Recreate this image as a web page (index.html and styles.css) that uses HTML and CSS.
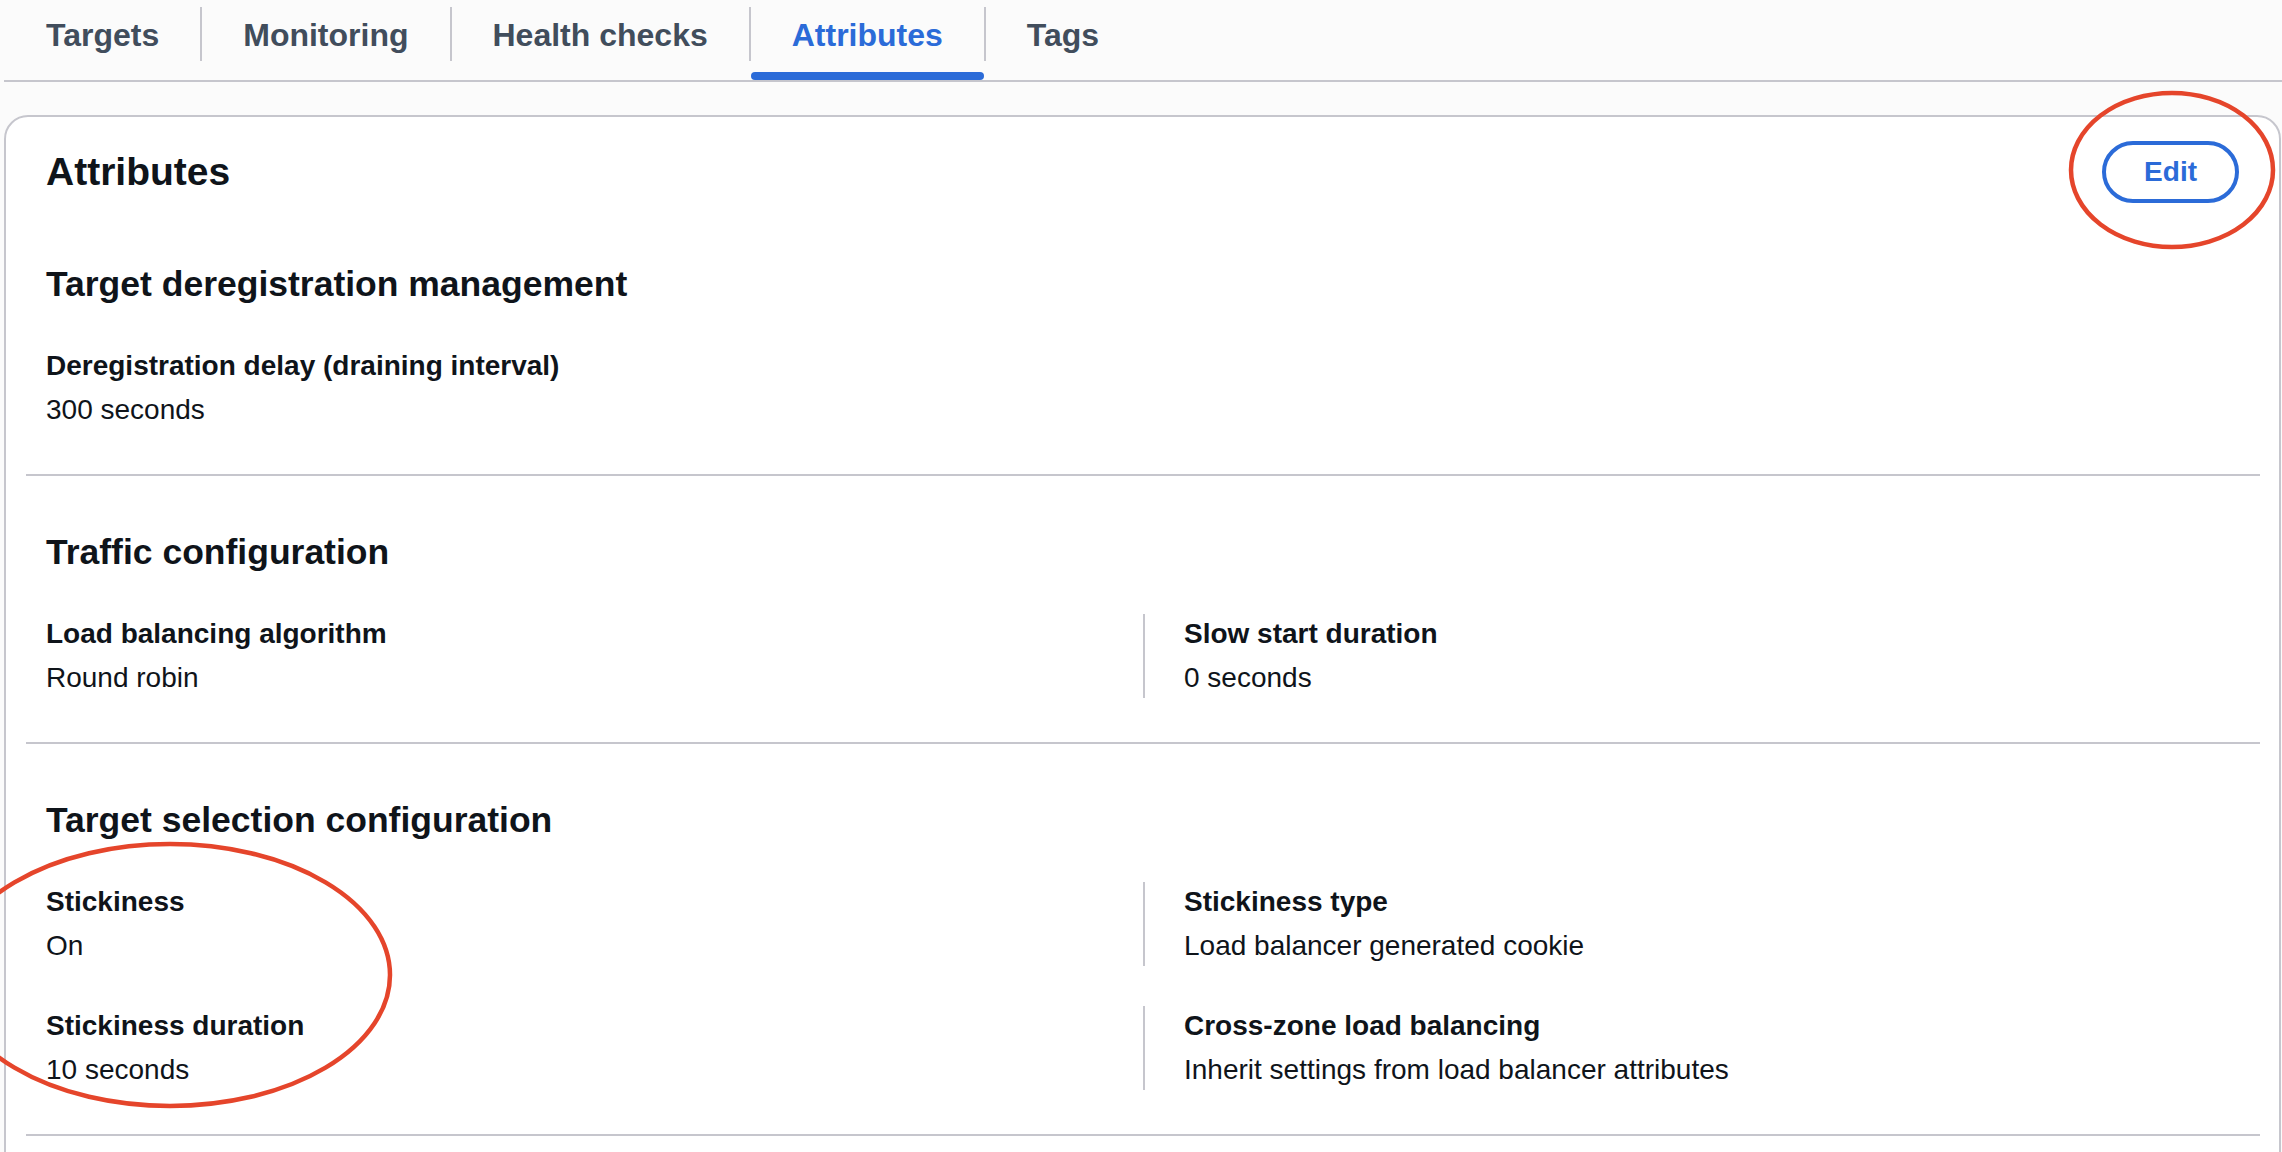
FILE: index.html
```html
<!DOCTYPE html>
<html lang="en">
<head>
<meta charset="utf-8">
<title>Target group attributes</title>
<link rel="stylesheet" href="styles.css">
</head>
<body>
<div class="page">
  <nav class="tabs">
    <div class="tab"><span class="tab-label">Targets</span><span class="tab-indicator"></span></div>
    <span class="tab-sep"></span>
    <div class="tab"><span class="tab-label">Monitoring</span><span class="tab-indicator"></span></div>
    <span class="tab-sep"></span>
    <div class="tab"><span class="tab-label">Health checks</span><span class="tab-indicator"></span></div>
    <span class="tab-sep"></span>
    <div class="tab tab-active"><span class="tab-label">Attributes</span><span class="tab-indicator"></span></div>
    <span class="tab-sep"></span>
    <div class="tab"><span class="tab-label">Tags</span><span class="tab-indicator"></span></div>
  </nav>

  <section class="card">
    <header class="card-header">
      <h2 class="card-title">Attributes</h2>
      <button class="btn-edit" type="button">Edit</button>
    </header>
    <div class="card-body">
      <div class="section section-first">
        <h3 class="section-title">Target deregistration management</h3>
        <div class="kv-grid">
          <div class="kv">
            <div class="kv-label">Deregistration delay (draining interval)</div>
            <div class="kv-value">300 seconds</div>
          </div>
        </div>
      </div>
      <div class="section">
        <h3 class="section-title">Traffic configuration</h3>
        <div class="kv-grid">
          <div class="kv">
            <div class="kv-label">Load balancing algorithm</div>
            <div class="kv-value">Round robin</div>
          </div>
          <div class="kv kv-right">
            <div class="kv-label">Slow start duration</div>
            <div class="kv-value">0 seconds</div>
          </div>
        </div>
      </div>
      <div class="section">
        <h3 class="section-title">Target selection configuration</h3>
        <div class="kv-grid">
          <div class="kv">
            <div class="kv-label">Stickiness</div>
            <div class="kv-value">On</div>
          </div>
          <div class="kv kv-right">
            <div class="kv-label">Stickiness type</div>
            <div class="kv-value">Load balancer generated cookie</div>
          </div>
          <div class="kv">
            <div class="kv-label">Stickiness duration</div>
            <div class="kv-value">10 seconds</div>
          </div>
          <div class="kv kv-right">
            <div class="kv-label">Cross-zone load balancing</div>
            <div class="kv-value">Inherit settings from load balancer attributes</div>
          </div>
        </div>
      </div>
      <div class="section section-tail"></div>
    </div>
  </section>

  <svg class="annotations" width="2282" height="1152" viewBox="0 0 2282 1152" aria-hidden="true">
    <ellipse cx="2172" cy="170" rx="101" ry="77" fill="none" stroke="#e5452b" stroke-width="4.5"/>
    <ellipse cx="170" cy="975" rx="220" ry="131" fill="none" stroke="#e5452b" stroke-width="4.5"/>
  </svg>
</div>
</body>
</html>
```

FILE: styles.css
```css
* {
  box-sizing: border-box;
}

html, body {
  margin: 0;
  padding: 0;
}

body {
  background: #fbfbfb;
  font-family: "Liberation Sans", Arial, sans-serif;
  color: #0f141a;
  overflow: hidden;
}

.page {
  position: relative;
  width: 2282px;
  height: 1152px;
  overflow: hidden;
}

/* Tabs */
.tabs {
  display: flex;
  margin-left: 4px;
  border-bottom: 2px solid #c6c6cd;
  height: 82px;
}

.tab {
  display: flex;
  flex-direction: column;
  height: 80px;
}

.tab-label {
  padding: 15px 41px 0 42px;
  font-size: 32px;
  line-height: 40px;
  font-weight: 700;
  color: #414d5c;
  white-space: nowrap;
}

.tab + .tab-sep + .tab .tab-label {
  padding-left: 41px;
}

.tab-indicator {
  margin-top: auto;
  height: 8px;
  border-radius: 4px;
}

.tab-active .tab-label {
  color: #2b6bd8;
}

.tab-active .tab-indicator {
  background: #2b6bd8;
}

.tab-sep {
  width: 2px;
  height: 54px;
  margin-top: 7px;
  background: #c6c6cd;
  flex: none;
}

/* Card */
.card {
  margin: 33px 1px 0 4px;
  border: 2px solid #c6c6cd;
  border-radius: 24px;
  background: #ffffff;
  height: 1200px;
}

.card-header {
  display: flex;
  justify-content: space-between;
  align-items: center;
  padding: 24px 40px 5px;
}

.card-title {
  margin: 0;
  font-size: 39px;
  line-height: 48px;
  font-weight: 700;
}

.btn-edit {
  height: 62px;
  padding: 0 38px;
  border: 4px solid #2b6bd8;
  border-radius: 32px;
  background: #ffffff;
  color: #2b6bd8;
  font-family: "Liberation Sans", Arial, sans-serif;
  font-size: 28px;
  font-weight: 700;
  line-height: 40px;
}

.card-body {
  padding: 0 19px 0 20px;
}

.section {
  padding: 54px 20px 44px;
  border-bottom: 2px solid #c6c6cd;
}

.section-first {
  padding-top: 54px;
}

.section-tail {
  border-bottom: none;
}

.section-title {
  margin: 0;
  font-size: 35.5px;
  line-height: 44px;
  font-weight: 700;
}

.kv-grid {
  display: grid;
  grid-template-columns: 1fr 1fr;
  row-gap: 40px;
  margin-top: 40px;
}

.kv-right {
  border-left: 2px solid #c6c6cd;
  padding-left: 39px;
}

.kv-label {
  font-size: 28px;
  line-height: 40px;
  font-weight: 700;
}

.kv-value {
  margin-top: 4px;
  font-size: 28px;
  line-height: 40px;
}

/* Annotation overlay (hand-drawn red circles) */
.annotations {
  position: absolute;
  left: 0;
  top: 0;
  pointer-events: none;
}
```
